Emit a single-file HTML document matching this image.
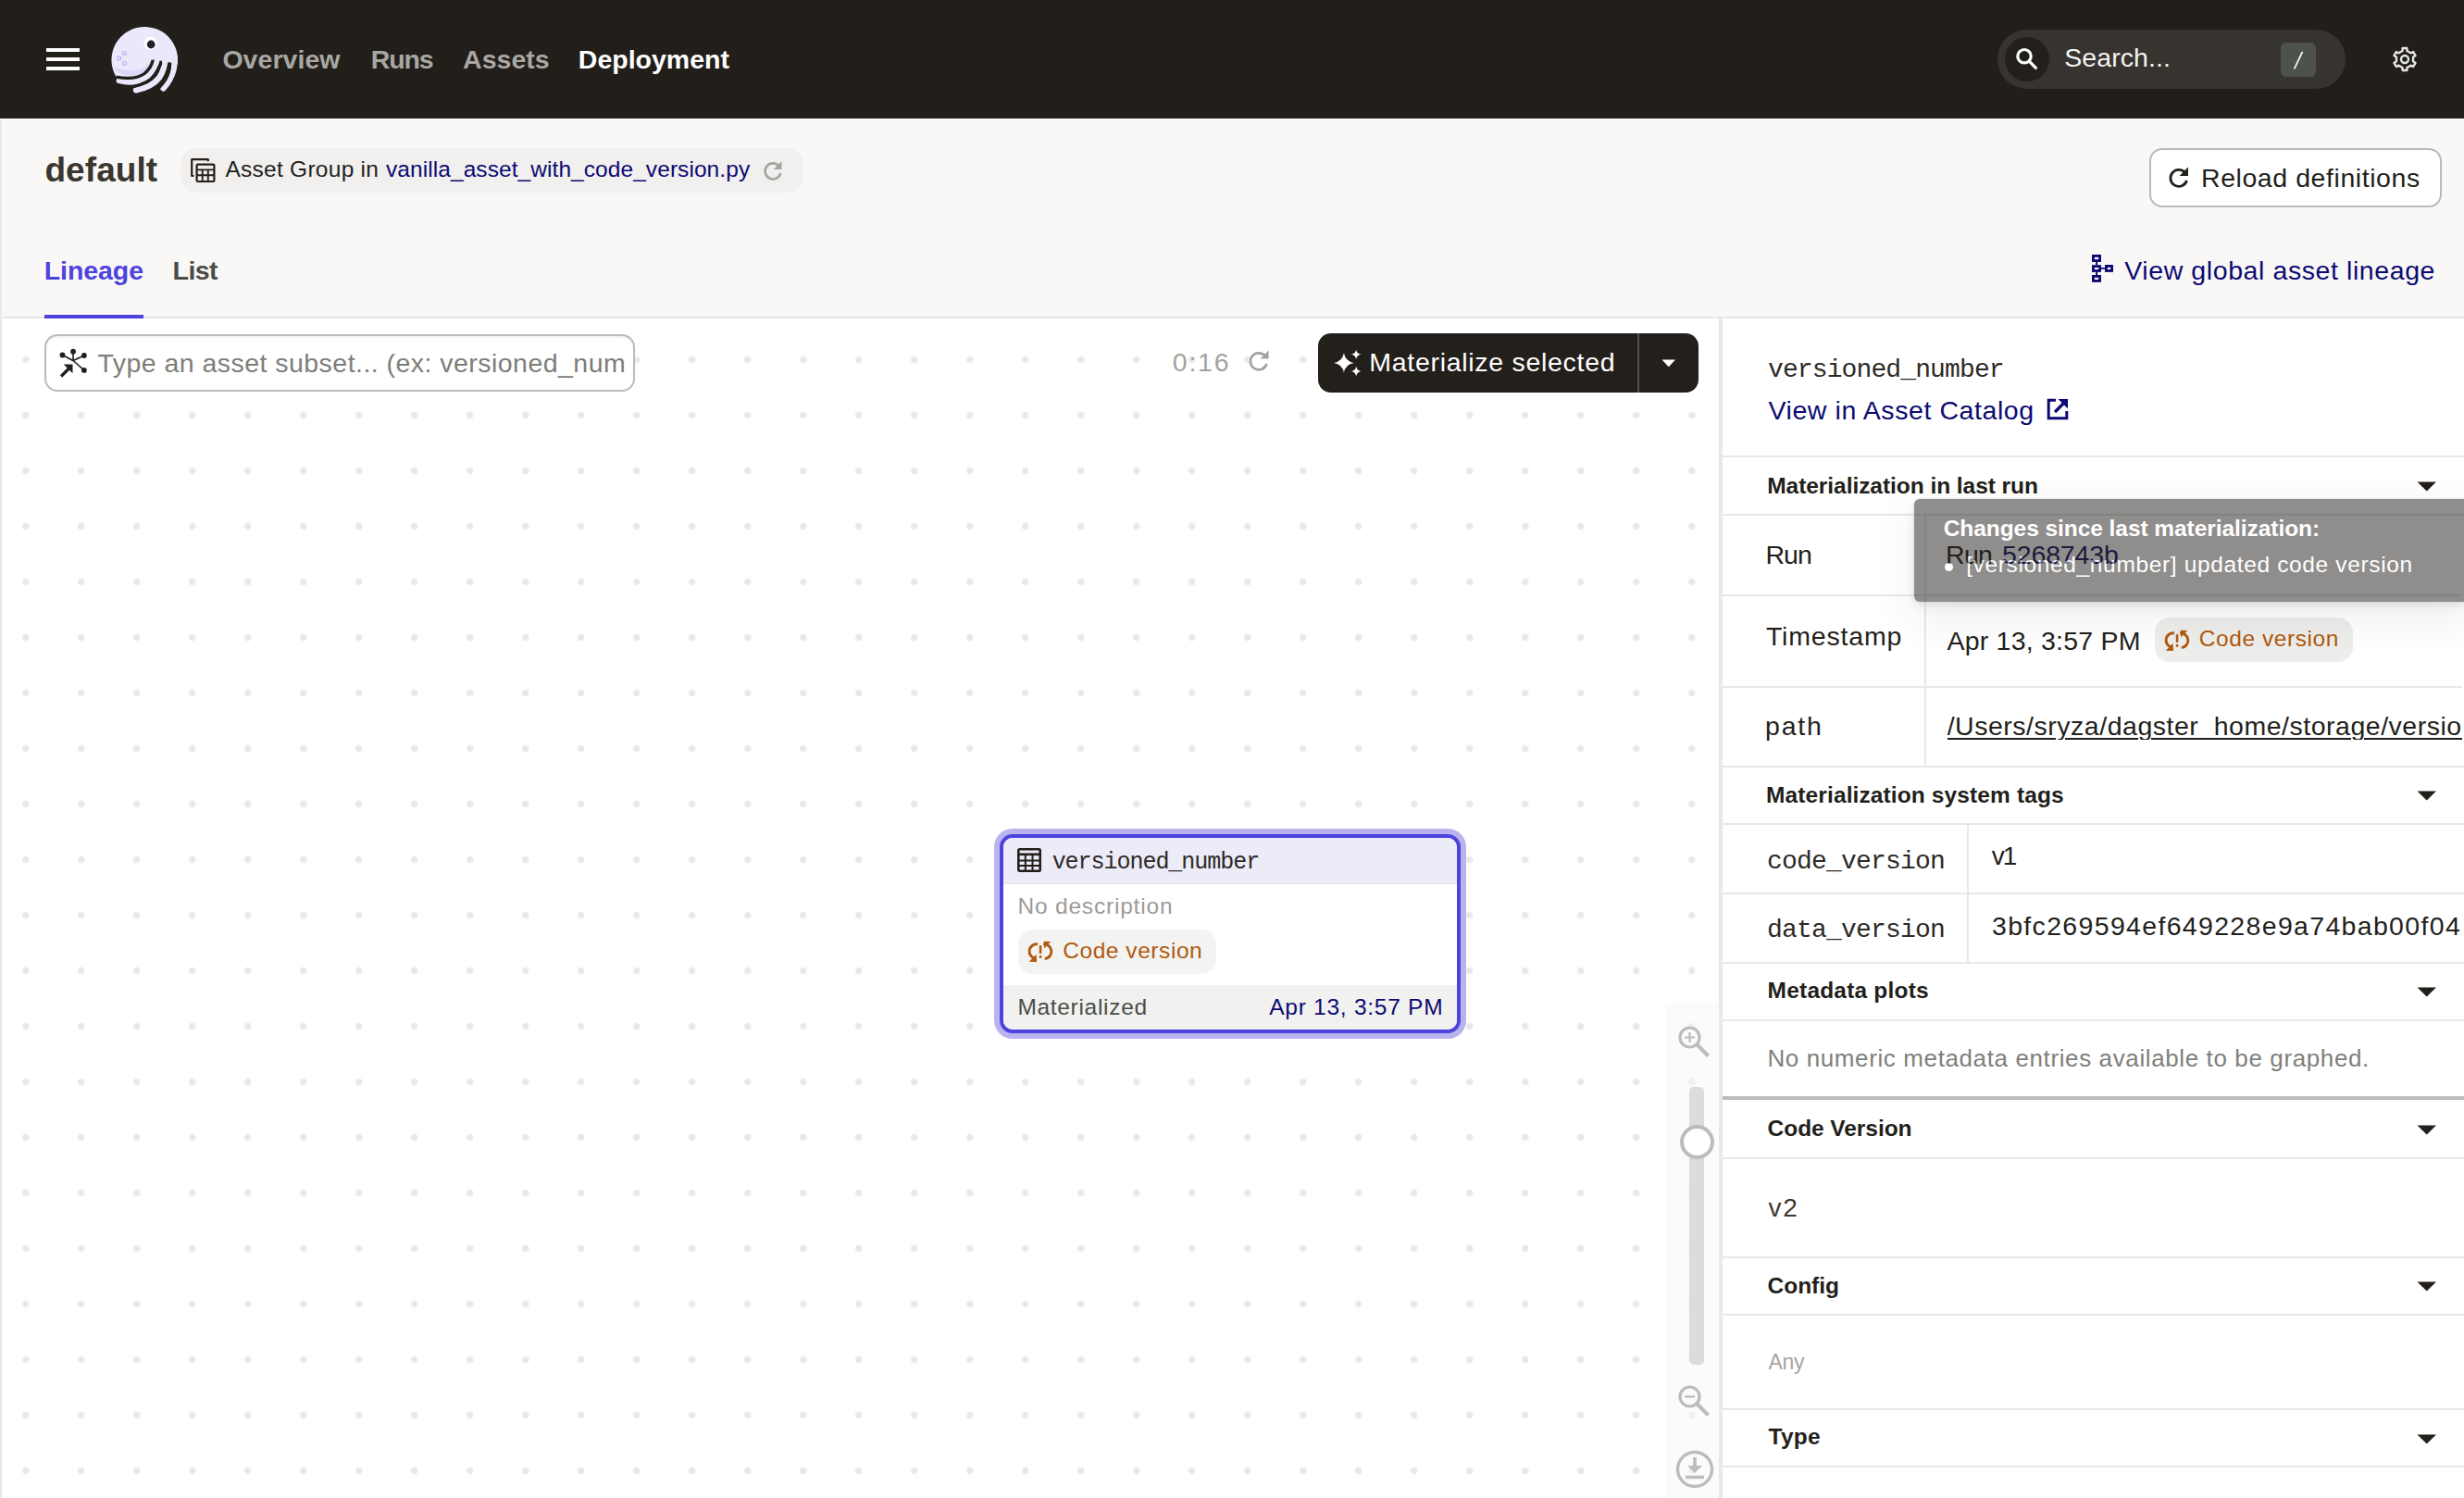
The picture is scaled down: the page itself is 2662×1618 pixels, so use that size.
<!DOCTYPE html>
<html><head><meta charset="utf-8">
<style>
html,body{margin:0;padding:0;}
body{width:2662px;height:1618px;overflow:hidden;position:relative;background:#fff;font-family:"Liberation Sans",sans-serif;}
.a{position:absolute;}
.t{position:absolute;white-space:nowrap;}
svg{position:absolute;overflow:visible;}
#top{left:0;top:0;width:2662px;height:128px;background:#221F1B;}
#hdr{left:0;top:128px;width:2662px;height:216px;background:#F9F8F7;}
#hdrline{left:0;top:128px;width:2662px;height:1px;background:#FDFDFC;}
#leftb{left:0;top:129px;width:2px;height:1489px;background:#E8E8E8;}
#tabb{left:3px;top:342px;width:2659px;height:2px;background:#E6E6E5;}
#canvas{left:3px;top:344px;width:1854px;height:1274px;background-color:#fff;
  background-image:radial-gradient(circle at 30px 30px,#E8E8E8 0,#E8E8E8 3.2px,rgba(232,232,232,0) 4.2px);
  background-size:60px 60px;background-position:-5.3px 14.5px;}
#pborder{left:1857px;top:344px;width:4px;height:1274px;background:#E8E8E8;}
#panel{left:1861px;top:344px;width:801px;height:1274px;background:#fff;}
.hl{position:absolute;height:2px;background:#E8E8E8;}
.vl{position:absolute;width:2px;background:#E8E8E8;}
</style></head><body>
<div id="top" class="a"></div>
<div id="hdr" class="a"></div>
<div id="hdrline" class="a"></div>
<div id="leftb" class="a"></div>
<div id="tabb" class="a"></div>
<div class="a" style="left:48px;top:340px;width:107px;height:4px;background:#4F43DD;"></div>
<div id="canvas" class="a"></div>
<div id="pborder" class="a"></div>
<div id="panel" class="a"></div>

<!-- ===== TOP BAR ICONS ===== -->
<div class="a" style="left:50px;top:52px;width:36px;height:4px;background:#fff"></div>
<div class="a" style="left:50px;top:62px;width:36px;height:4px;background:#fff"></div>
<div class="a" style="left:50px;top:72px;width:36px;height:4px;background:#fff"></div>
<!-- logo -->
<svg style="left:116px;top:24px" width="80" height="80" viewBox="0 0 80 80">
  <path d="M9.5 59 A35.8 35.8 0 1 1 75.8 45 L49.2 40 Q47 50 40 55.5 Q30 62.8 9.5 59.2 Z" fill="#EAE8FA"/>
  <path d="M9 53 Q26 61.5 39 55.5 Q46 50 49.5 40 Q42 48 35 51 Q24 55 8 49 Z" fill="#DCD8F5"/>
  <path d="M12.8 63 Q30 67.5 43 59 Q51 52 55 36" stroke="#EAE8FA" stroke-width="6.4" fill="none" stroke-linecap="round"/>
  <path d="M31 73.3 Q48 70 56 60 Q61.5 52 63 38" stroke="#EAE8FA" stroke-width="6.4" fill="none" stroke-linecap="round"/>
  <path d="M60.5 71.3 Q68 63 71 53 Q72.8 47 72.8 38" stroke="#EAE8FA" stroke-width="6.4" fill="none" stroke-linecap="round"/>
  <path d="M9.5 59.2 Q30 62.8 40 55.5 Q47 50 49.2 41" stroke="#221F1B" stroke-width="3.3" fill="none"/>
  <path d="M27 69.8 Q45 66.2 51 57 Q56 50 58 44" stroke="#221F1B" stroke-width="3.3" fill="none"/>
  <path d="M56 70.5 Q64.5 62 66.5 53 Q67.5 49 67.5 45.5" stroke="#221F1B" stroke-width="3.3" fill="none"/>
  <circle cx="46.5" cy="22.8" r="7.2" fill="#fff"/>
  <circle cx="47.2" cy="24" r="4.4" fill="#221F2E"/>
  <circle cx="18.4" cy="33.4" r="1.9" fill="none" stroke="#B9B3F2" stroke-width="1.2"/>
  <circle cx="12.8" cy="39" r="1.9" fill="none" stroke="#B9B3F2" stroke-width="1.2"/>
  <circle cx="18.7" cy="44.4" r="1.9" fill="none" stroke="#B9B3F2" stroke-width="1.2"/>
</svg>
<!-- search pill -->
<div class="a" style="left:2158px;top:32px;width:376px;height:64px;border-radius:32px;background:#37332F"></div>
<div class="a" style="left:2166px;top:40px;width:48px;height:48px;border-radius:24px;background:#231F1B"></div>
<svg style="left:2176px;top:50px" width="28" height="28" viewBox="0 0 28 28">
  <circle cx="11" cy="10.7" r="7.2" stroke="#fff" stroke-width="3.2" fill="none"/>
  <path d="M16.3 16.2 L24.3 24.3" stroke="#fff" stroke-width="3.2"/>
</svg>
<div class="a" style="left:2464px;top:46px;width:38px;height:37px;border-radius:6px;background:#4D524C"></div>
<svg style="left:2464px;top:46px" width="38" height="37" viewBox="0 0 38 37">
  <path d="M23.5 9.8 L14.6 28.5" stroke="#fff" stroke-width="1.7"/>
</svg>
<!-- gear -->
<svg style="left:2584px;top:50px" width="28" height="28" viewBox="0 0 28 28">
  <path d="M11.44 5.06 L11.67 2.02 L16.33 2.02 L16.56 5.06 L20.46 7.31 L23.21 6.00 L25.54 10.03 L23.02 11.75 L23.02 16.25 L25.54 17.97 L23.21 22.00 L20.46 20.69 L16.56 22.94 L16.33 25.98 L11.67 25.98 L11.44 22.94 L7.54 20.69 L4.79 22.00 L2.46 17.97 L4.98 16.25 L4.98 11.75 L2.46 10.03 L4.79 6.00 L7.54 7.31 Z" stroke="#E6E6E4" stroke-width="2.4" fill="none" stroke-linejoin="round"/>
  <circle cx="14" cy="14" r="4" stroke="#E6E6E4" stroke-width="2.4" fill="none"/>
</svg>

<!-- ===== HEADER ===== -->
<div class="a" style="left:195px;top:160px;width:672px;height:48px;border-radius:16px;background:#F1F0EF"></div>
<svg style="left:206px;top:171px" width="26" height="26" viewBox="0 0 26 26">
  <path d="M3.4 19 H1.2 V1.2 H18.8 V3.2" stroke="#231F1B" stroke-width="2.2" fill="none" stroke-linejoin="round"/>
  <rect x="6.6" y="6.6" width="18.8" height="18.4" rx="1" stroke="#231F1B" stroke-width="2.2" fill="none"/>
  <path d="M6.6 12.4 H25.4 M6.6 18.3 H25.4 M12.7 12.4 V25 M18.8 12.4 V25" stroke="#231F1B" stroke-width="1.9"/>
</svg>
<svg style="left:823px;top:172px" width="24" height="24" viewBox="0 0 24 24">
  <path d="M19 8 A8.5 8.5 0 1 0 20.3 15" stroke="#A5A4A0" stroke-width="2.6" fill="none"/>
  <path d="M21.5 2 V11 H12.5 Z" fill="#A5A4A0"/>
</svg>
<!-- reload button -->
<div class="a" style="left:2322px;top:160px;width:312px;height:60px;border:2px solid #BBBAB7;border-radius:14px;background:#fff"></div>
<svg style="left:2342px;top:179px" width="24" height="24" viewBox="0 0 24 24">
  <path d="M19.3 8.2 A9 9 0 1 0 20.5 16" stroke="#231F1B" stroke-width="2.8" fill="none"/>
  <path d="M22 1.5 V11 H12.5 Z" fill="#231F1B"/>
</svg>
<!-- global lineage icon -->
<svg style="left:2259px;top:274px" width="26" height="32" viewBox="0 0 26 32">
  <g stroke="#0C0A72" stroke-width="2.8" fill="none">
    <rect x="2.4" y="2.4" width="7.2" height="5.2"/>
    <rect x="2.4" y="13.6" width="7.2" height="4.9"/>
    <rect x="2.4" y="24.4" width="7.2" height="5"/>
    <rect x="16.4" y="13.4" width="6.2" height="5.1"/>
  </g>
  <path d="M6.1 8.5 V12.5 M6.1 19.6 V23.5 M10.5 15.9 H15.5" stroke="#0C0A72" stroke-width="1.9"/>
</svg>

<!-- ===== CANVAS TOOLBAR ===== -->
<div class="a" style="left:48px;top:361px;width:634px;height:58px;border:2px solid #BDBCBA;border-radius:14px;background:#fff;box-shadow:inset 0 2px 2px rgba(0,0,0,.05)"></div>
<svg style="left:64px;top:376px" width="32" height="32" viewBox="0 0 32 32">
  <g fill="#231F1B">
    <circle cx="15" cy="3.7" r="2.9"/>
    <circle cx="3.5" cy="7.5" r="2.9"/>
    <circle cx="26.9" cy="8" r="2.9"/>
    <circle cx="26.9" cy="23.9" r="2.9"/>
  </g>
  <path d="M15 4 V13.5 M3.5 7.5 L15 13.5 L26.9 8 M15 13.5 L26.9 23.9" stroke="#231F1B" stroke-width="1.6" fill="none"/>
  <path d="M2 30.5 L11.5 21" stroke="#231F1B" stroke-width="3.2"/>
  <path d="M4.7 17.5 L14.5 17.5 L14.5 27.2 Z" fill="#231F1B"/>
</svg>
<svg style="left:1348px;top:376.5px" width="24" height="24" viewBox="0 0 24 24">
  <path d="M19.3 8.2 A9 9 0 1 0 20.5 16" stroke="#A3A29E" stroke-width="2.6" fill="none"/>
  <path d="M22.5 1.5 V10.5 H13.5 Z" fill="#A3A29E"/>
</svg>
<div class="a" style="left:1424px;top:360px;width:411px;height:64px;border-radius:14px;background:#231F1B"></div>
<div class="a" style="left:1769px;top:360px;width:2px;height:64px;background:#4E5550"></div>
<svg style="left:1795px;top:388px" width="16" height="9" viewBox="0 0 16 9"><path d="M0.5 0.5 H15 L7.75 8.3 Z" fill="#fff"/></svg>
<svg style="left:1440px;top:377px" width="32" height="31" viewBox="0 0 32 31">
  <path fill="#fff" d="M11.90 4.30 Q13.41 13.42 22.70 14.90 Q13.41 16.38 11.90 25.50 Q10.39 16.38 1.10 14.90 Q10.39 13.42 11.90 4.30 Z"/>
  <path fill="#fff" d="M25.10 0.70 Q25.87 5.09 30.60 5.80 Q25.87 6.51 25.10 10.90 Q24.33 6.51 19.60 5.80 Q24.33 5.09 25.10 0.70 Z"/>
  <path fill="#fff" d="M25.20 18.40 Q25.91 23.13 30.30 23.90 Q25.91 24.67 25.20 29.40 Q24.49 24.67 20.10 23.90 Q24.49 23.13 25.20 18.40 Z"/>
</svg>

<!-- ===== NODE ===== -->
<div class="a" style="left:1074px;top:895px;width:510px;height:227px;border-radius:20px;background:#B9B3EE"></div>
<div class="a" style="left:1080px;top:901px;width:490px;height:207px;border:4px solid #4F43DD;border-radius:14px;background:#fff;overflow:hidden">
  <div class="a" style="left:0;top:0;width:490px;height:49px;background:#ECEBF8;border-bottom:1px solid #E6E4EC"></div>
  <div class="a" style="left:0;top:159px;width:490px;height:48px;background:#F1F1F0"></div>
  <div class="a" style="left:16px;top:99px;width:214px;height:48px;border-radius:16px;background:#F3F3F2"></div>
</div>
<svg style="left:1099px;top:916px" width="26" height="26" viewBox="0 0 26 26">
  <rect x="1.3" y="1.3" width="23.4" height="23.4" rx="1.2" stroke="#231F1B" stroke-width="2.6" fill="none"/>
  <path d="M1.3 6.8 H24.7" stroke="#231F1B" stroke-width="2.6"/>
  <path d="M1.3 13.5 H24.7 M1.3 19 H24.7 M8.8 6.8 V24.7 M16.5 6.8 V24.7" stroke="#231F1B" stroke-width="2"/>
</svg>
<svg style="left:1111px;top:1016px" width="26" height="24" viewBox="0 0 26 24">
  <g stroke="#B05A0C" stroke-width="2.9" fill="none">
    <path d="M10 3.9 A7.6 7.6 0 0 0 7.6 19.2"/>
    <path d="M16.2 3.9 A7.6 7.6 0 0 1 17.8 19.6"/>
  </g>
  <path d="M0.8 22.7 L9 23.1 L8.6 14.8 Z" fill="#B05A0C"/>
  <path d="M16.8 0.8 L24.2 1.1 L17.1 8.6 Z" fill="#B05A0C"/>
  <rect x="11.8" y="5.2" width="2.5" height="8.7" fill="#B05A0C"/>
  <rect x="11.8" y="16" width="2.5" height="2.8" fill="#B05A0C"/>
</svg>

<!-- ===== ZOOM CONTROLS ===== -->
<div class="a" style="left:1799px;top:1082px;width:58px;height:536px;background:rgba(246,247,246,.5)"></div>
<svg style="left:1810px;top:1106px" width="40" height="40" viewBox="0 0 40 40">
  <circle cx="15.5" cy="14.5" r="10.5" stroke="#BDBCBA" stroke-width="3.2" fill="none"/>
  <path d="M23 22 L35.5 34.5" stroke="#BDBCBA" stroke-width="4"/>
  <path d="M10 14.5 H21 M15.5 9 V20" stroke="#BDBCBA" stroke-width="2.2"/>
</svg>
<div class="a" style="left:1825px;top:1174px;width:16px;height:300px;border-radius:5px;background:#DCDCDB"></div>
<div class="a" style="left:1815px;top:1215px;width:29px;height:29px;border-radius:50%;border:4px solid #BDBCBA;background:#fff"></div>
<svg style="left:1810px;top:1494px" width="40" height="40" viewBox="0 0 40 40">
  <circle cx="15.5" cy="14.5" r="10.5" stroke="#BDBCBA" stroke-width="3.2" fill="none"/>
  <path d="M23 22 L35.5 34.5" stroke="#BDBCBA" stroke-width="4"/>
  <path d="M10 14.5 H21" stroke="#BDBCBA" stroke-width="2.2"/>
</svg>
<svg style="left:1810px;top:1566px" width="42" height="42" viewBox="0 0 42 42">
  <circle cx="21" cy="21" r="18.5" stroke="#BDBCBA" stroke-width="3.4" fill="none"/>
  <path d="M21 8 V22" stroke="#BDBCBA" stroke-width="3.6"/>
  <path d="M13 17 L21 25 L29 17 Z" fill="#BDBCBA"/>
  <path d="M11 29.5 H31" stroke="#BDBCBA" stroke-width="3.4"/>
</svg>

<!-- ===== RIGHT PANEL ===== -->
<div class="hl" style="left:1861px;top:492px;width:801px"></div>
<svg style="left:2211px;top:430px" width="24" height="24" viewBox="0 0 24 24">
  <path d="M10 2.2 H2.2 V21.8 H21.8 V14" stroke="#0C0A72" stroke-width="3" fill="none"/>
  <path d="M9 15 L19.5 4.5" stroke="#0C0A72" stroke-width="3.2"/>
  <path d="M12.5 1 H23 V11.5 Z" fill="#0C0A72"/>
</svg>
<svg style="left:2611px;top:520px" width="22" height="11" viewBox="0 0 22 11"><path d="M0.5 0.5 H21 L10.75 10.5 Z" fill="#231F1B"/></svg>
<div class="hl" style="left:1861px;top:555px;width:801px"></div>
<div class="vl" style="left:2079px;top:557px;height:271px"></div>
<div class="hl" style="left:1861px;top:642px;width:799px"></div>
<div class="hl" style="left:1861px;top:741px;width:799px"></div>
<div class="hl" style="left:1861px;top:827px;width:801px"></div>
<div class="a" style="left:2328px;top:667px;width:214px;height:48px;border-radius:16px;background:#EDEDEC"></div>
<svg style="left:2339px;top:680px" width="26" height="24" viewBox="0 0 26 24">
  <g stroke="#B05A0C" stroke-width="2.9" fill="none">
    <path d="M10 3.9 A7.6 7.6 0 0 0 7.6 19.2"/>
    <path d="M16.2 3.9 A7.6 7.6 0 0 1 17.8 19.6"/>
  </g>
  <path d="M0.8 22.7 L9 23.1 L8.6 14.8 Z" fill="#B05A0C"/>
  <path d="M16.8 0.8 L24.2 1.1 L17.1 8.6 Z" fill="#B05A0C"/>
  <rect x="11.8" y="5.2" width="2.5" height="8.7" fill="#B05A0C"/>
  <rect x="11.8" y="16" width="2.5" height="2.8" fill="#B05A0C"/>
</svg>
<svg style="left:2611px;top:854px" width="22" height="11" viewBox="0 0 22 11"><path d="M0.5 0.5 H21 L10.75 10.5 Z" fill="#231F1B"/></svg>
<div class="hl" style="left:1861px;top:889px;width:801px"></div>
<div class="vl" style="left:2125px;top:891px;height:149px"></div>
<div class="hl" style="left:1861px;top:964px;width:801px"></div>
<div class="hl" style="left:1861px;top:1039px;width:801px"></div>
<svg style="left:2611px;top:1066px" width="22" height="11" viewBox="0 0 22 11"><path d="M0.5 0.5 H21 L10.75 10.5 Z" fill="#231F1B"/></svg>
<div class="hl" style="left:1861px;top:1101px;width:801px"></div>
<div class="a" style="left:1861px;top:1184px;width:801px;height:4px;background:#BDBCBA"></div>
<svg style="left:2611px;top:1215px" width="22" height="11" viewBox="0 0 22 11"><path d="M0.5 0.5 H21 L10.75 10.5 Z" fill="#231F1B"/></svg>
<div class="hl" style="left:1861px;top:1250px;width:801px"></div>
<div class="hl" style="left:1861px;top:1357px;width:801px"></div>
<svg style="left:2611px;top:1384px" width="22" height="11" viewBox="0 0 22 11"><path d="M0.5 0.5 H21 L10.75 10.5 Z" fill="#231F1B"/></svg>
<div class="hl" style="left:1861px;top:1419px;width:801px"></div>
<div class="hl" style="left:1861px;top:1521px;width:801px"></div>
<svg style="left:2611px;top:1549px" width="22" height="11" viewBox="0 0 22 11"><path d="M0.5 0.5 H21 L10.75 10.5 Z" fill="#231F1B"/></svg>
<div class="hl" style="left:1861px;top:1583px;width:801px"></div>

<div class="t" style="left:240.38px;top:50.08px;font-family:'Liberation Sans';font-weight:700;font-size:28.5px;line-height:28.5px;letter-spacing:0.060px;color:#A8A7A3;">Overview</div>
<div class="t" style="left:400.67px;top:50.08px;font-family:'Liberation Sans';font-weight:700;font-size:28.5px;line-height:28.5px;letter-spacing:-1.103px;color:#A8A7A3;">Runs</div>
<div class="t" style="left:500.10px;top:50.08px;font-family:'Liberation Sans';font-weight:700;font-size:28.5px;line-height:28.5px;letter-spacing:0.007px;color:#A8A7A3;">Assets</div>
<div class="t" style="left:624.86px;top:50.08px;font-family:'Liberation Sans';font-weight:700;font-size:28.5px;line-height:28.5px;letter-spacing:-0.011px;color:#FFFFFF;">Deployment</div>
<div class="t" style="left:2230.24px;top:47.68px;font-family:'Liberation Sans';font-weight:400;font-size:28.5px;line-height:28.5px;letter-spacing:0.078px;color:#F3F3F1;">Search...</div>
<div class="t" style="left:48.43px;top:165.45px;font-family:'Liberation Sans';font-weight:700;font-size:37px;line-height:37px;letter-spacing:0.070px;color:#3A3630;">default</div>
<div class="t" style="left:243.43px;top:171.18px;font-family:'Liberation Sans';font-weight:400;font-size:24.5px;line-height:24.5px;letter-spacing:0.267px;color:#231F1B;">Asset Group in</div>
<div class="t" style="left:417.05px;top:171.18px;font-family:'Liberation Sans';font-weight:400;font-size:24.5px;line-height:24.5px;letter-spacing:0.067px;color:#0C0A72;">vanilla_asset_with_code_version.py</div>
<div class="t" style="left:47.72px;top:277.57px;font-family:'Liberation Sans';font-weight:700;font-size:28.5px;line-height:28.5px;letter-spacing:-0.063px;color:#4F43DD;">Lineage</div>
<div class="t" style="left:186.53px;top:277.57px;font-family:'Liberation Sans';font-weight:700;font-size:28.5px;line-height:28.5px;letter-spacing:-0.539px;color:#4B4D48;">List</div>
<div class="t" style="left:2378.00px;top:177.78px;font-family:'Liberation Sans';font-weight:400;font-size:28.5px;line-height:28.5px;letter-spacing:0.564px;color:#231F1B;">Reload definitions</div>
<div class="t" style="left:2295.24px;top:277.67px;font-family:'Liberation Sans';font-weight:400;font-size:28.5px;line-height:28.5px;letter-spacing:0.588px;color:#0C0A72;">View global asset lineage</div>
<div class="t" style="left:105.43px;top:377.67px;font-family:'Liberation Sans';font-weight:400;font-size:28.5px;line-height:28.5px;letter-spacing:0.464px;color:#7E7D79;">Type an asset subset... (ex: versioned_num</div>
<div class="t" style="left:1266.81px;top:377.47px;font-family:'Liberation Sans';font-weight:400;font-size:28.5px;line-height:28.5px;letter-spacing:1.777px;color:#A3A29E;">0:16</div>
<div class="t" style="left:1479.24px;top:377.47px;font-family:'Liberation Sans';font-weight:400;font-size:28.5px;line-height:28.5px;letter-spacing:0.711px;color:#FFFFFF;">Materialize selected</div>
<div class="t" style="left:1136.67px;top:918.85px;font-family:'Liberation Mono';font-weight:400;font-size:25px;line-height:25px;letter-spacing:-1.034px;color:#2E2A25;">versioned_number</div>
<div class="t" style="left:1099.43px;top:966.57px;font-family:'Liberation Sans';font-weight:400;font-size:24.5px;line-height:24.5px;letter-spacing:0.807px;color:#9C9B97;">No description</div>
<div class="t" style="left:1148.19px;top:1014.67px;font-family:'Liberation Sans';font-weight:400;font-size:24.5px;line-height:24.5px;letter-spacing:0.561px;color:#B05A0C;">Code version</div>
<div class="t" style="left:1099.38px;top:1075.58px;font-family:'Liberation Sans';font-weight:400;font-size:24.5px;line-height:24.5px;letter-spacing:0.694px;color:#4B4D48;">Materialized</div>
<div class="t" style="left:1371.19px;top:1075.58px;font-family:'Liberation Sans';font-weight:400;font-size:24.5px;line-height:24.5px;letter-spacing:0.737px;color:#0C0A72;">Apr 13, 3:57 PM</div>
<div class="t" style="left:1909.96px;top:385.84px;font-family:'Liberation Mono';font-weight:400;font-size:28px;line-height:28px;letter-spacing:-0.879px;color:#2E2A25;">versioned_number</div>
<div class="t" style="left:1910.43px;top:428.57px;font-family:'Liberation Sans';font-weight:400;font-size:28.5px;line-height:28.5px;letter-spacing:0.576px;color:#0C0A72;">View in Asset Catalog</div>
<div class="t" style="left:1909.24px;top:512.57px;font-family:'Liberation Sans';font-weight:700;font-size:24.5px;line-height:24.5px;letter-spacing:-0.051px;color:#231F1B;">Materialization in last run</div>
<div class="t" style="left:1907.43px;top:584.67px;font-family:'Liberation Sans';font-weight:400;font-size:28.5px;line-height:28.5px;letter-spacing:-0.931px;color:#231F1B;">Run</div>
<div class="t" style="left:2102.05px;top:584.67px;font-family:'Liberation Sans';font-weight:400;font-size:28.5px;line-height:28.5px;letter-spacing:-0.741px;color:#231F1B;">Run</div>
<div class="t" style="left:2163.00px;top:584.67px;font-family:'Liberation Sans';font-weight:400;font-size:28.5px;line-height:28.5px;letter-spacing:-0.136px;color:#16135E;">5268743b</div>
<div class="t" style="left:1907.91px;top:673.07px;font-family:'Liberation Sans';font-weight:400;font-size:28.5px;line-height:28.5px;letter-spacing:0.811px;color:#231F1B;">Timestamp</div>
<div class="t" style="left:2103.43px;top:677.98px;font-family:'Liberation Sans';font-weight:400;font-size:28.5px;line-height:28.5px;letter-spacing:0.223px;color:#231F1B;">Apr 13, 3:57 PM</div>
<div class="t" style="left:2375.86px;top:678.07px;font-family:'Liberation Sans';font-weight:400;font-size:24.5px;line-height:24.5px;letter-spacing:0.556px;color:#B05A0C;">Code version</div>
<div class="t" style="left:1907.10px;top:770.48px;font-family:'Liberation Sans';font-weight:400;font-size:28.5px;line-height:28.5px;letter-spacing:1.760px;color:#231F1B;">path</div>
<div class="t" style="left:2103.70px;top:770.48px;font-family:'Liberation Sans';font-weight:400;font-size:28.5px;line-height:28.5px;letter-spacing:0.516px;color:#231F1B;text-decoration:underline;text-underline-offset:3px;text-decoration-thickness:2px;width:556.30px;overflow:hidden;">/Users/sryza/dagster_home/storage/versioned_number</div>
<div class="t" style="left:1908.10px;top:846.77px;font-family:'Liberation Sans';font-weight:700;font-size:24.5px;line-height:24.5px;letter-spacing:0.112px;color:#231F1B;">Materialization system tags</div>
<div class="t" style="left:1909.10px;top:916.54px;font-family:'Liberation Mono';font-weight:400;font-size:28px;line-height:28px;letter-spacing:-0.812px;color:#2E2A25;">code_version</div>
<div class="t" style="left:2151.86px;top:911.10px;font-family:'Liberation Sans';font-weight:400;font-size:28px;line-height:28px;letter-spacing:-2.100px;color:#231F1B;">v1</div>
<div class="t" style="left:1909.10px;top:991.24px;font-family:'Liberation Mono';font-weight:400;font-size:28px;line-height:28px;letter-spacing:-0.812px;color:#2E2A25;">data_version</div>
<div class="t" style="left:2152.00px;top:986.17px;font-family:'Liberation Sans';font-weight:400;font-size:28.5px;line-height:28.5px;letter-spacing:1.326px;color:#231F1B;width:508.00px;overflow:hidden;">3bfc269594ef649228e9a74bab00f04</div>
<div class="t" style="left:1909.62px;top:1058.38px;font-family:'Liberation Sans';font-weight:700;font-size:24.5px;line-height:24.5px;letter-spacing:0.191px;color:#231F1B;">Metadata plots</div>
<div class="t" style="left:1909.38px;top:1129.80px;font-family:'Liberation Sans';font-weight:400;font-size:26px;line-height:26px;letter-spacing:0.614px;color:#807F7B;">No numeric metadata entries available to be graphed.</div>
<div class="t" style="left:1909.62px;top:1207.17px;font-family:'Liberation Sans';font-weight:700;font-size:24.5px;line-height:24.5px;letter-spacing:-0.060px;color:#231F1B;">Code Version</div>
<div class="t" style="left:1910.62px;top:1291.20px;font-family:'Liberation Sans';font-weight:400;font-size:28px;line-height:28px;letter-spacing:1.710px;color:#3A3630;">v2</div>
<div class="t" style="left:1909.62px;top:1376.67px;font-family:'Liberation Sans';font-weight:700;font-size:24.5px;line-height:24.5px;letter-spacing:-0.042px;color:#231F1B;">Config</div>
<div class="t" style="left:1910.62px;top:1460.45px;font-family:'Liberation Sans';font-weight:400;font-size:23px;line-height:23px;letter-spacing:-0.376px;color:#A6A5A1;">Any</div>
<div class="t" style="left:1910.62px;top:1540.38px;font-family:'Liberation Sans';font-weight:700;font-size:24.5px;line-height:24.5px;letter-spacing:0.214px;color:#231F1B;">Type</div>

<!-- ===== TOOLTIP ===== -->
<div class="a" style="left:0;top:0;width:2662px;height:1618px;opacity:.5">
<div class="a" style="left:2068px;top:539px;width:600px;height:111px;border-radius:6px;background:#231F1B;box-shadow:0 0 0 1px rgba(35,31,27,.1),0 4px 8px rgba(35,31,27,.2),0 16px 40px rgba(35,31,27,.15)"></div>
<div class="a" style="left:2101px;top:608px;width:9px;height:9px;border-radius:50%;background:#fff"></div>
<div class="t" style="left:2099.67px;top:558.88px;font-family:'Liberation Sans';font-weight:700;font-size:24.5px;line-height:24.5px;letter-spacing:-0.058px;color:#FFFFFF;">Changes since last materialization:</div>
<div class="t" style="left:2124.15px;top:597.77px;font-family:'Liberation Sans';font-weight:400;font-size:24.5px;line-height:24.5px;letter-spacing:0.641px;color:#FFFFFF;">[versioned_number] updated code version</div>
</div>

</body></html>
